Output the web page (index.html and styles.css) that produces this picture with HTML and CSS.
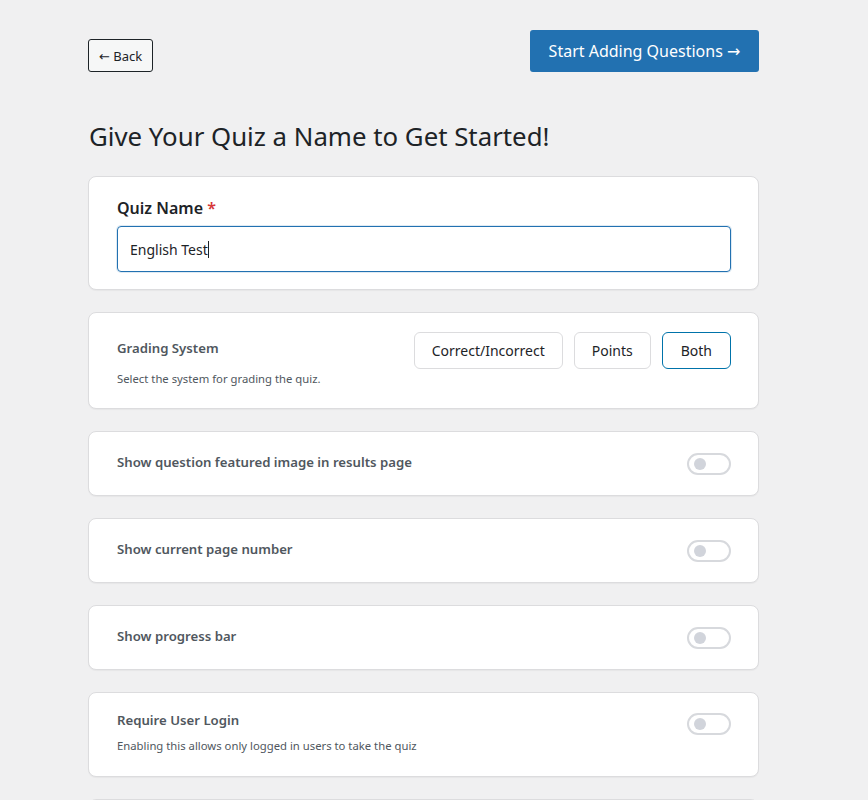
FILE: index.html
```html
<!DOCTYPE html>
<html>
<head>
<meta charset="utf-8">
<link rel="stylesheet" href="styles.css">
</head>
<body>
<div class="page">
  <div class="topbar">
    <button class="back"><span class="arrow">←</span> Back</button>
    <button class="start">Start Adding Questions <span class="arrow">→</span></button>
  </div>
  <h1 class="title">Give Your Quiz a Name to Get Started!</h1>

  <div class="card name-card">
    <label class="name-label">Quiz Name <span class="req">*</span></label>
    <div class="input">English Test<span class="caret"></span></div>
  </div>

  <div class="card row-card grading">
    <div class="text">
      <div class="label">Grading System</div>
      <div class="desc">Select the system for grading the quiz.</div>
    </div>
    <div class="choices">
      <button class="choice">Correct/Incorrect</button>
      <button class="choice">Points</button>
      <button class="choice active">Both</button>
    </div>
  </div>

  <div class="card row-card toggle-card">
    <div class="label">Show question featured image in results page</div>
    <span class="toggle"><span class="knob"></span></span>
  </div>

  <div class="card row-card toggle-card">
    <div class="label">Show current page number</div>
    <span class="toggle"><span class="knob"></span></span>
  </div>

  <div class="card row-card toggle-card">
    <div class="label">Show progress bar</div>
    <span class="toggle"><span class="knob"></span></span>
  </div>

  <div class="card row-card toggle-card tall">
    <div class="text">
      <div class="label">Require User Login</div>
      <div class="desc">Enabling this allows only logged in users to take the quiz</div>
    </div>
    <span class="toggle"><span class="knob"></span></span>
  </div>

  <div class="card row-card toggle-card"></div>
</div>
</body>
</html>
```

FILE: styles.css
```css
html, body {
  margin: 0;
  padding: 0;
  background: #f0f0f1;
  font-family: "Noto Sans", "Open Sans", sans-serif;
  color: #1d2327;
}
body {
  overflow: hidden;
  height: 800px;
}
.page {
  width: 671px;
  margin-left: 88px;
  padding-top: 30px;
}
.topbar {
  display: flex;
  justify-content: space-between;
  align-items: flex-start;
}
button {
  font-family: inherit;
  cursor: pointer;
}
.arrow {
  font-family: "DejaVu Sans", sans-serif;
}
.back {
  margin-top: 9px;
  height: 33px;
  width: 65px;
  padding: 0;
  background: #f6f7f7;
  border: 1px solid #1d2327;
  border-radius: 3px;
  font-size: 13px;
  color: #1d2327;
}
.start {
  height: 42px;
  width: 229px;
  padding: 0;
  background: #2271b1;
  border: none;
  border-radius: 3px;
  color: #fff;
  font-size: 16px;
}
.title {
  margin: 46px 0 22px 1px;
  font-size: 25.8px;
  font-weight: 400;
  line-height: 36px;
  color: #1d2327;
}
.card {
  background: #fff;
  border: 1px solid #dcdcde;
  border-radius: 8px;
  box-shadow: 0 1px 1px rgba(0,0,0,0.04);
  margin-bottom: 22px;
  box-sizing: border-box;
}
.name-card {
  height: 114px;
  padding: 19px 27px 0 28px;
}
.name-label {
  display: block;
  font-size: 16px;
  font-weight: 600;
  line-height: 24px;
  color: #1d2327;
}
.req {
  color: #d63638;
}
.input {
  margin-top: 6px;
  height: 46px;
  box-sizing: border-box;
  border: 1px solid #2271b1;
  border-radius: 4px;
  box-shadow: 0 0 0 1px rgba(34,113,177,0.15);
  padding: 0 12px;
  display: flex;
  align-items: center;
  font-size: 14px;
  color: #1d2327;
}
.caret {
  display: inline-block;
  width: 1px;
  height: 17px;
  background: #1d2327;
}
.row-card {
  display: flex;
  align-items: center;
  justify-content: space-between;
  padding: 0 27px 0 28px;
}
.grading {
  height: 97px;
  align-items: flex-start;
  padding-top: 19px;
}
.grading .text {
  padding-top: 7px;
}
.label {
  font-size: 13.2px;
  font-weight: 600;
  color: #50575e;
  line-height: 18px;
}
.toggle-card > .label {
  margin-top: -3px;
}
.desc {
  font-size: 11.3px;
  color: #50575e;
  line-height: 16px;
  margin-top: 14px;
}
.choices {
  display: flex;
  gap: 11px;
}
.choice {
  height: 37px;
  padding: 0 17px;
  background: #fff;
  border: 1px solid #dcdcde;
  border-radius: 6px;
  font-size: 14px;
  color: #1d2327;
}
.choice.active {
  border-color: #0073aa;
  padding: 0 18px;
}
.toggle-card {
  height: 65px;
}
.toggle-card.tall {
  height: 85px;
  align-items: flex-start;
  padding-top: 18px;
}
.toggle-card.tall .desc {
  margin-top: 9px;
}
.toggle-card.tall .toggle {
  margin-top: 2px;
}
.toggle {
  width: 44px;
  height: 22px;
  box-sizing: border-box;
  border: 2px solid #d7d9dd;
  border-radius: 12px;
  display: flex;
  align-items: center;
  padding-left: 5px;
}
.knob {
  width: 12px;
  height: 12px;
  border-radius: 50%;
  background: #d1d4db;
}
```
